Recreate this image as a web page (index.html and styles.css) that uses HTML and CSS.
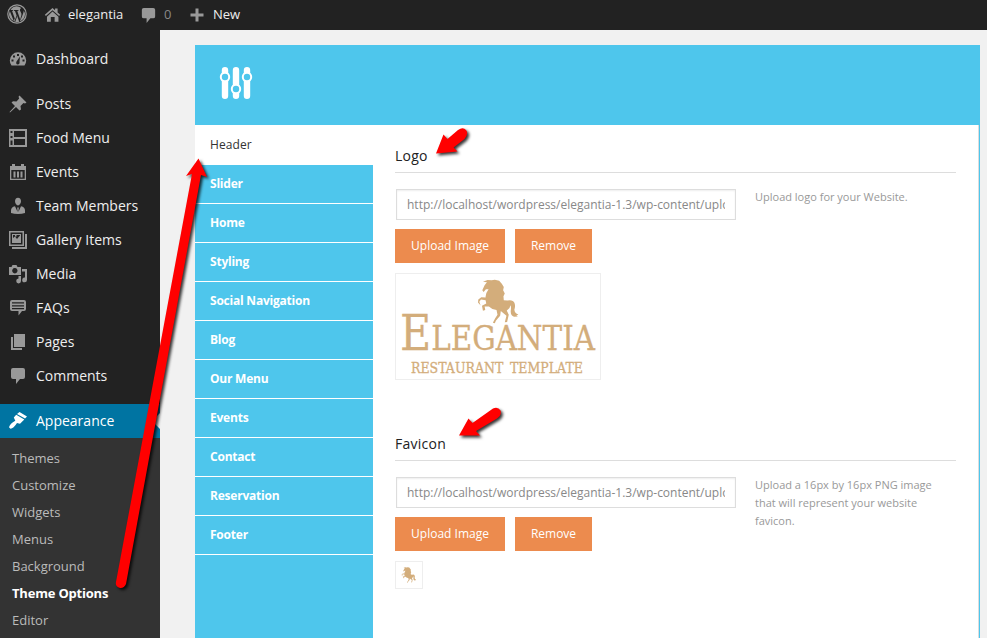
FILE: index.html
```html
<!DOCTYPE html>
<html lang="en">
<head>
<meta charset="utf-8">
<title>Theme Options</title>
<link rel="stylesheet" href="styles.css">
</head>
<body>
<svg class="defs" aria-hidden="true">
  <symbol id="horse" viewBox="36 26 130 136">
    <path d="M90 28 L103 31 L111 40 L117 50 L115 60 L120 70 L116 78 L117 90 L128 91 Q145 88 149 98 Q153 107 149 119 Q150 130 161 133 L155 137 L160 139 L148 140 Q137 137 138 122 Q140 111 137 105 Q136 114 126 121 L132 134 L127 156 L120 157 L125 137 L108 123 L106 137 L93 152 L90 160 L84 158 L91 145 L98 134 L95 120 Q82 119 72 109 L59 109 L61 120 L54 122 L51 107 L64 100 L62 90 L48 88 L43 95 L47 106 L39 97 L40 88 L49 81 L62 82 Q61 70 71 57 L63 57 L56 65 L52 60 L59 45 L66 36 L54 34 L68 29 L80 30 Z"/>
  </symbol>
  <symbol id="bubble" viewBox="0 0 20 20"><path d="M5 2h10q2 0 2 2v7q0 2-2 2h-3l-4 5v-5H5q-2 0-2-2V4q0-2 2-2z"/></symbol>
</svg>
<header class="adminbar">
  <svg class="wp" viewBox="0 0 20 20"><circle cx="10" cy="10" r="9.2" fill="none" stroke="currentColor" stroke-width="1.2"/><path d="M2.8 7 L7.2 18 L9.6 11.5 L8 7.1 L6.9 6.8 V6 H11.5 V6.8 L10.3 7.1 L13.2 15.6 L14.3 11.5 Q14.9 9.5 13.7 8 Q12 5.300 14.200 4 Q10.500.9 6.500 3 Q4.600 4 3.500 6 H6 V6.800 L5.100 7 L7.800 14.500 L6.700 17 Q2 14.500 2 10 Z M16.700 6.500 Q17 9 12.700 17.400 Q17.600 15.500 18 10.500 Q18 8.500 16.700 6.500Z M10.200 12 L8.200 18 Q10.300 18.500 12.200 17.700Z"/></svg>
  <svg class="home" viewBox="0 0 20 20"><path d="M10 2.300 L13 5 V3 H16 V7.700 L19 10.400 L17.800 11.800 L10 4.900 L2.200 11.800 L1 10.400Z M10 6.500 L17 12.500 V18.500 H12.500 V13 H8 V18.500 H3.500 V12.500Z"/></svg>
  <span class="site">elegantia</span>
  <svg class="bub"><use href="#bubble"/></svg>
  <span class="count">0</span>
  <svg class="plus" viewBox="0 0 14 14"><path d="M5.500 0.500h3v5h5v3h-5v5h-3v-5h-5v-3h5z"/></svg>
  <span>New</span>
</header>
<div class="shell">
  <aside class="sidebar">
    <nav class="menu">
      <a class="item gap"><svg viewBox="0 0 20 20"><path fill-rule="evenodd" d="M3.500 16.500 Q1.800 14 1.800 11.500 A8.200 8.200 0 0 1 18.200 11.500 Q18.200 14 16.500 16.500Z M9 5h2v2H9z M5 6.500h2v2H5z M13 6.500h2v2h-2z M3.500 10.500h2v2h-2z M14.500 10.500h2v2h-2z M12 7.500 L11.500 12.500 Q12 15.500 9.700 15.500 Q7.500 15 8.500 12.500Z"/></svg>Dashboard</a>
      <a class="item"><svg viewBox="0 0 20 20"><path d="M11.500 1.500 L18.500 8.500 L17 9.500 L15.500 9 L12.500 12 L13 15.500 L11.500 16.500 L8 13 L2 18.500 L1.500 18 L7 12 L3.500 8.500 L5 7.200 L8.500 7.500 L11.200 4.500 L10.500 2.700Z"/></svg>Posts</a>
      <a class="item"><svg viewBox="0 0 20 20"><path fill-rule="evenodd" d="M1 1h18v18H1z M2.500 3v2h2V3z M2.500 8v2h2V8z M2.500 12.500v4.500h2v-4.500z M6 3v6h11V3z M6 11V17h11v-6z"/></svg>Food Menu</a>
      <a class="item"><svg viewBox="0 0 20 20"><path fill-rule="evenodd" d="M2 4h2V2h3v2h6V2h3v2h2v14H2z M3.300 8v8.800h13.400V8z M5.500 9.500h2v6h-2z M9 9.500h2v6H9z M12.500 9.500h2v6h-2z"/></svg>Events</a>
      <a class="item"><svg viewBox="0 0 20 20"><path d="M10 1.800c2 0 3 1.600 3 3.500S11.500 9.500 10 9.500 7 7.200 7 5.300s1-3.500 3-3.500z M7 10.200 L9.600 16 L9.200 11.500h1.600L10.400 16 L13 10.200 Q17 11 17 14.500V17Q14 18 10 18T3 17V14.500Q3 11 7 10.200z"/></svg>Team Members</a>
      <a class="item"><svg viewBox="0 0 20 20"><path fill-rule="evenodd" d="M1 1h15v15H1z M2.500 2.500v12h12v-12z M4 4h9v9H4z M5 5v3l2-1.500 2 2.500 3-3.500V5H8.500v1.500H7V5z M17 4h2v15H4v-2h13z"/></svg>Gallery Items</a>
      <a class="item"><svg viewBox="0 0 20 20"><path fill-rule="evenodd" d="M1 3h2.500L4.500 1h4l1 2H13v8H1z M6.800 4a2.700 2.700 0 1 0 .1 0z M14 5h5v11a2.400 2.400 0 1 1-2-2.400V7.500h-3z M10.500 12H13v5a2.400 2.400 0 1 1-2.500-2.400z"/></svg>Media</a>
      <a class="item"><svg viewBox="0 0 20 20"><path fill-rule="evenodd" d="M4 2h12q2 0 2 2v7q0 2-2 2h-2l-3.500 4.500V13H4q-2 0-2-2V4q0-2 2-2z M4 4.300v1.200h12V4.300z M4 7.200v1.200h12V7.200z M4 10.100v1.200h12v-1.200z"/></svg>FAQs</a>
      <a class="item"><svg viewBox="0 0 20 20"><path d="M6 2h11v13H6z M3 5h2v11h9v2H3z"/></svg>Pages</a>
      <a class="item gap"><svg><use href="#bubble"/></svg>Comments</a>
      <a class="item current"><svg viewBox="0 0 20 20"><path d="M11.500 1 L19 5.500 L17 7.500 L9 3Z M8.200 3.800 L16.300 8.500 L12 12.800 L9 12 Q5.500 17.500 2.500 17.800 L1 16.300 Q2 12.500 7.300 9.800 L5.800 6.500Z"/></svg>Appearance</a>
    </nav>
    <nav class="submenu">
      <a>Themes</a><a>Customize</a><a>Widgets</a><a>Menus</a><a>Background</a><a class="on">Theme Options</a><a>Editor</a>
    </nav>
  </aside>
  <main class="panel">
    <div class="banner">
      <svg viewBox="0 0 34 34"><g stroke="#fff" stroke-width="6.400" stroke-linecap="round"><path d="M6 4.200v25.600M17 4.200v25.600M28 4.200v25.600"/></g><g fill="#4ec6ec" stroke="#fff" stroke-width="2"><circle cx="6" cy="11" r="4.200"/><circle cx="17" cy="23" r="4.200"/><circle cx="28" cy="11" r="4.200"/></g></svg>
    </div>
    <div class="body">
      <nav class="tabs">
        <a class="active">Header</a><a>Slider</a><a>Home</a><a>Styling</a><a>Social Navigation</a><a>Blog</a><a>Our Menu</a><a>Events</a><a>Contact</a><a>Reservation</a><a>Footer</a>
      </nav>
      <div class="options">
        <section>
          <h3>Logo</h3>
          <div class="row">
            <div class="field">
              <input type="text" value="http://localhost/wordpress/elegantia-1.3/wp-content/uploads/logo.png">
              <div class="buttons"><button class="up">Upload Image</button><button class="rm">Remove</button></div>
              <div class="preview">
                <svg viewBox="0 0 204 105">
                  <use href="#horse" x="81" y="5" width="43" height="45"/>
                  <g class="brand">
                    <text x="4" y="76" font-size="33" textLength="195" lengthAdjust="spacingAndGlyphs"><tspan font-size="48">E</tspan>LEGANTIA</text>
                    <text class="tagline" x="15" y="99" font-size="14" textLength="172" lengthAdjust="spacingAndGlyphs">RESTAURANT TEMPLATE</text>
                  </g>
                </svg>
              </div>
            </div>
            <p>Upload logo for your Website.</p>
          </div>
        </section>
        <section>
          <h3>Favicon</h3>
          <div class="row">
            <div class="field">
              <input type="text" value="http://localhost/wordpress/elegantia-1.3/wp-content/uploads/favicon.png">
              <div class="buttons"><button class="up">Upload Image</button><button class="rm">Remove</button></div>
              <div class="preview small"><svg><use href="#horse"/></svg></div>
            </div>
            <p>Upload a 16px by 16px PNG image that will represent your website favicon.</p>
          </div>
        </section>
      </div>
    </div>
  </main>
</div>
<svg class="arrows" viewBox="0 0 987 638">
  <path d="M198.500 158.500 L207 177 L201 175 L126 584 Q124 588.500 120 588 Q115 586.500 116 582 L192 174 L186 176Z"/>
  <path d="M436 153.500 L443.500 134.500 L447.500 139 L458 130 Q463 126.500 466 130 Q469 133.500 464.500 139 L453.500 147.500 L457.500 151.500Z"/>
  <path d="M459 435.500 L468.500 418.500 L472.500 423 L493 408.500 Q498 406.500 500.500 410.500 Q502 415 497 418.500 L476 431 L480 435.500Z"/>
</svg>
</body>
</html>
```

FILE: styles.css
```css
* { box-sizing: border-box; }
body { margin: 0; width: 987px; height: 638px; overflow: hidden; background: #f1f1f1; font-family: "Open Sans", "Liberation Sans", sans-serif; }
.defs { position: absolute; width: 0; height: 0; }
svg { fill: currentColor; flex: none; }

.adminbar { height: 30px; background: #222; color: #eee; display: flex; align-items: center; font-size: 13px; padding-left: 7px; }
.adminbar svg { color: #999; }
.adminbar span { line-height: 28px; padding-bottom: 2px; }
.wp { width: 20px; height: 20px; margin: -2px 17px 0 0; }
.home { width: 17px; height: 17px; margin: -2px 7px 0 0; }
.site { width: 71px; }
.bub { width: 19px; height: 19px; margin-right: 6px; }
.adminbar .count { width: 26px; color: #888; }
.plus { width: 14px; height: 14px; margin-right: 9px; }

.shell { display: flex; height: 608px; }
.sidebar { width: 160px; background: #222; padding-top: 12px; display: flex; flex-direction: column; }
.menu { display: flex; flex-direction: column; }
.item { position: relative; display: flex; align-items: center; gap: 8px; height: 34px; padding: 0 0 2px 8px; font-size: 14px; color: #eee; }
.item svg { width: 20px; height: 20px; margin-top: 2px; color: #999; }
.item.gap { margin-bottom: 11px; }
.item.current { background: #0074a2; color: #fff; }
.item.current svg { color: #fff; }
.item.current::after { content: ""; position: absolute; right: 0; top: 9px; border: 8px solid transparent; border-left: 0; border-right-color: #f1f1f1; }
.submenu { flex: 1; min-height: 0; background: #333; padding: 7px 12px 0; display: flex; flex-direction: column; font-size: 13px; line-height: 27px; color: #bbb; }
.submenu .on { color: #fff; font-weight: 700; letter-spacing: -.2px; }

.panel { width: 785px; margin: 15px 0 0 35px; display: flex; flex-direction: column; }
.banner { flex: none; height: 80px; background: #4ec6ec; padding: 21px 24px; }
.banner svg { width: 34px; height: 34px; display: block; }
.body { flex: 1; min-height: 0; overflow: hidden; display: flex; background: #fff; border-right: 1px solid #4ec6ec; }
.tabs { width: 178px; background: #4ec6ec; display: flex; flex-direction: column; font-size: 12px; font-weight: 700; letter-spacing: -.22px; color: #fff; }
.tabs a { flex: none; height: 39px; line-height: 37px; padding-left: 15px; border-bottom: 1px solid #fff; }
.tabs .active { height: 40px; line-height: 40px; background: #fff; color: #333; font-weight: 400; letter-spacing: .1px; }
.options { flex: 1; padding: 18px 22px 0; border-right: 1px solid #ddd; }
section { height: 288px; }
h3 { margin: 0; width: 561px; height: 30px; border-bottom: 1px solid #ddd; font-size: 14px; line-height: 26px; font-weight: 400; letter-spacing: .25px; color: #222; }
.row { display: flex; padding-top: 16px; }
.field { width: 360px; }
input { display: block; width: 340px; height: 31px; margin-left: 1px; padding: 0 10px; border: 1px solid #ddd; box-shadow: inset 0 1px 2px rgba(0,0,0,.07); font: 12px "Open Sans", sans-serif; color: #888; background: #fff; }
.buttons { display: flex; gap: 10px; margin-top: 9px; }
button { height: 34px; border: 0; padding: 0 0 1px; background: #ec8b4e; color: #fff; font: 12px "Open Sans", sans-serif; }
.up { width: 110px; }
.rm { width: 77px; }
.preview { width: 206px; height: 107px; margin-top: 10px; border: 1px solid #eee; color: #d3ad7b; }
.preview svg { display: block; width: 204px; height: 105px; }
.brand { font-family: "DejaVu Serif", serif; stroke: currentColor; stroke-width: .3; }
.tagline { word-spacing: 3px; }
.preview.small { width: 28px; height: 28px; padding: 5px; }
.preview.small svg { width: 16px; height: 16px; }
p { margin: -1px 0 0; width: 190px; font-size: 11px; line-height: 18px; color: #999; }
.arrows { position: absolute; left: 0; top: 0; width: 987px; height: 638px; pointer-events: none; fill: #f00; filter: drop-shadow(2px 2px 1.500px rgba(0,0,0,.8)); }
```
